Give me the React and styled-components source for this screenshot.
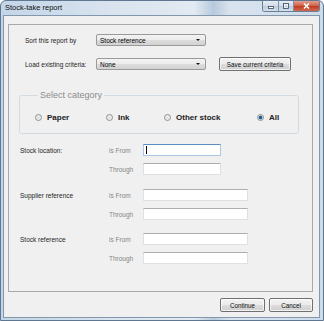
import styled, { createGlobalStyle } from "styled-components";

const GlobalStyle = createGlobalStyle`
  html, body {
    margin: 0;
    padding: 0;
    background: #ffffff;
  }
  body {
    font-family: "Liberation Sans", Arial, sans-serif;
  }
`;

const Window = styled.div`
  width: 324px;
  height: 321px;
  box-sizing: border-box;
  border: 1px solid #5f7791;
  border-radius: 6px 6px 0 0;
  background: linear-gradient(
    90deg,
    #c3d5e8 0%,
    #d9e4ef 35%,
    #e2eaf2 60%,
    #b7cadd 66%,
    #d8e3ee 71%,
    #cddcea 100%
  );
  display: flex;
  flex-direction: column;
  overflow: hidden;
`;

const TitleBar = styled.div`
  height: 14px;
  display: flex;
  align-items: flex-start;
  justify-content: space-between;
  padding-left: 4px;
  padding-right: 3px;
`;

const Title = styled.span`
  font-size: 7.5px;
  line-height: 14px;
  color: #101010;
`;

const CaptionGroup = styled.div`
  display: flex;
  height: 10px;
  border: 1px solid #6d7f93;
  border-top: none;
  border-radius: 0 0 3px 3px;
  overflow: hidden;
`;

const CaptionButton = styled.div`
  width: ${(p) => p.$w}px;
  height: 100%;
  display: flex;
  align-items: center;
  justify-content: center;
  background: ${(p) =>
    p.$close
      ? "linear-gradient(#e3a08f, #cf5b43 50%, #c0391f 51%, #d06b4f)"
      : "linear-gradient(#e6edf4, #cfdbe7 50%, #bccbdb 51%, #d4e0ec)"};
  & + & {
    border-left: 1px solid #7f91a5;
  }
`;

const Client = styled.div`
  flex: 1;
  margin: 0 3px 2px 2px;
  border: 1px solid #8397ac;
  background: #f0f0f0;
  display: flex;
  flex-direction: column;
  color: #1e1e1e;
`;

const Panel = styled.div`
  flex: 1;
  margin: 8px 6px 0 4px;
  border: 1px solid #a9a9a9;
  display: flex;
  flex-direction: column;
`;

const CriteriaGrid = styled.div`
  display: grid;
  grid-template-columns: 71px 110px auto;
  grid-auto-rows: 14px;
  row-gap: 10px;
  align-items: center;
  padding: 8px 0 0 16px;
`;

const Label = styled.span`
  font-size: 6.5px;
  color: ${(p) => (p.$muted ? "#858585" : "#1e1e1e")};
  white-space: nowrap;
`;

const Combo = styled.div`
  width: 110px;
  height: 12px;
  box-sizing: border-box;
  border: 1px solid #9a9a9a;
  border-radius: 2px;
  background: linear-gradient(#f3f3f3, #ebebeb 50%, #dddddd 51%, #d2d2d2);
  display: flex;
  align-items: center;
  justify-content: space-between;
  padding: 0 5px 0 3px;
  font-size: 6.5px;
  color: #000;
`;

const Arrow = styled.span`
  width: 0;
  height: 0;
  border-left: 2px solid transparent;
  border-right: 2px solid transparent;
  border-top: 2px solid #111;
`;

const PushButton = styled.div`
  width: ${(p) => p.$w}px;
  height: 14px;
  margin-left: ${(p) => p.$ml || 0}px;
  box-sizing: border-box;
  border: 1px solid #707070;
  border-radius: 2px;
  background: linear-gradient(#f2f2f2, #ebebeb 50%, #dddddd 51%, #cfcfcf);
  box-shadow: inset 0 0 0 1px rgba(255, 255, 255, 0.7);
  display: flex;
  align-items: center;
  justify-content: center;
  font-size: 6.3px;
  color: #111;
`;

const Group = styled.fieldset`
  width: 280px;
  box-sizing: border-box;
  margin: 19px 0 0 10px;
  padding: 12px 0 11px 15px;
  border: 1px solid #d3dbe2;
  border-radius: 3px;
  min-inline-size: 0;
`;

const Legend = styled.legend`
  font-size: 9px;
  line-height: 10px;
  color: #8c8c8c;
  padding: 0 2px;
  margin-left: 3px;
`;

const RadioRow = styled.div`
  display: grid;
  grid-template-columns: 71px 58px 93px auto;
  height: 10px;
  align-items: center;
`;

const RadioItem = styled.div`
  display: flex;
  align-items: center;
  gap: 5px;
  font-size: 8px;
  font-weight: bold;
  color: #222;
`;

const RadioDot = styled.span`
  width: 7px;
  height: 7px;
  box-sizing: border-box;
  border-radius: 50%;
  border: 1px solid #8e8f8f;
  background: ${(p) =>
    p.$checked
      ? "radial-gradient(circle, #1b4e7d 0, #2a69a3 1.6px, #dde3ea 2.2px, #f4f4f4 100%)"
      : "radial-gradient(circle, #dcdcdc 0, #eeeeee 60%, #f8f8f8 100%)"};
`;

const RangeSection = styled.div`
  margin-top: 10px;
  padding-left: 11px;
`;

const RangeGroup = styled.div`
  display: grid;
  grid-template-columns: 89px 34px auto;
  grid-auto-rows: 12px;
  row-gap: 7px;
  align-items: center;
  margin-top: ${(p) => p.$mt || 0}px;
`;

const TextBox = styled.div`
  width: ${(p) => p.$w}px;
  height: 12px;
  box-sizing: border-box;
  background: #fff;
  border: 1px solid ${(p) => (p.$focused ? "#a9c6e2" : "#dde1e6")};
  border-top-color: ${(p) => (p.$focused ? "#5b8fc0" : "#abadb3")};
  display: flex;
  align-items: center;
`;

const Caret = styled.span`
  width: 1px;
  height: 8px;
  margin-left: 2px;
  background: #000;
`;

const Footer = styled.div`
  display: flex;
  justify-content: flex-end;
  gap: 4px;
  padding: 6px 6px 5px 0;
`;

const ranges = [
  { label: "Stock location:", width: 78, mt: 0, focused: true },
  { label: "Supplier reference", width: 105, mt: 14 },
  { label: "Stock reference", width: 105, mt: 13 },
];

const categories = [
  { name: "Paper" },
  { name: "Ink" },
  { name: "Other stock" },
  { name: "All", checked: true },
];

export default function App() {
  return (
    <>
      <GlobalStyle />
      <Window>
        <TitleBar>
          <Title>Stock-take report</Title>
          <CaptionGroup>
            <CaptionButton $w={15}>
              <svg width="6" height="6" viewBox="0 0 6 6">
                <rect x="0.5" y="3.5" width="5" height="2" fill="#fff" stroke="#3b4a5c" strokeWidth="0.8" />
              </svg>
            </CaptionButton>
            <CaptionButton $w={14}>
              <svg width="6" height="6" viewBox="0 0 6 6">
                <rect x="0.5" y="0.5" width="5" height="5" fill="none" stroke="#3b4a5c" strokeWidth="0.8" />
                <rect x="1.5" y="1.5" width="3" height="3" fill="none" stroke="#fff" strokeWidth="0.6" />
              </svg>
            </CaptionButton>
            <CaptionButton $w={25} $close>
              <svg width="7" height="6" viewBox="0 0 7 6">
                <path d="M1 0.5 L6 5.5 M6 0.5 L1 5.5" stroke="#fff" strokeWidth="1.6" />
              </svg>
            </CaptionButton>
          </CaptionGroup>
        </TitleBar>
        <Client>
          <Panel>
            <CriteriaGrid>
              <Label>Sort this report by</Label>
              <Combo>
                Stock reference
                <Arrow />
              </Combo>
              <span />
              <Label>Load existing criteria:</Label>
              <Combo>
                None
                <Arrow />
              </Combo>
              <PushButton $w={72} $ml={13}>
                Save current criteria
              </PushButton>
            </CriteriaGrid>

            <Group>
              <Legend>Select category</Legend>
              <RadioRow>
                {categories.map((c) => (
                  <RadioItem key={c.name}>
                    <RadioDot $checked={c.checked} />
                    {c.name}
                  </RadioItem>
                ))}
              </RadioRow>
            </Group>

            <RangeSection>
              {ranges.map((r) => (
                <RangeGroup key={r.label} $mt={r.mt}>
                  <Label>{r.label}</Label>
                  <Label $muted>is From</Label>
                  <TextBox $w={r.width} $focused={r.focused}>
                    {r.focused && <Caret />}
                  </TextBox>
                  <span />
                  <Label $muted>Through</Label>
                  <TextBox $w={r.width} />
                </RangeGroup>
              ))}
            </RangeSection>
          </Panel>
          <Footer>
            <PushButton $w={45}>Continue</PushButton>
            <PushButton $w={44}>Cancel</PushButton>
          </Footer>
        </Client>
      </Window>
    </>
  );
}
